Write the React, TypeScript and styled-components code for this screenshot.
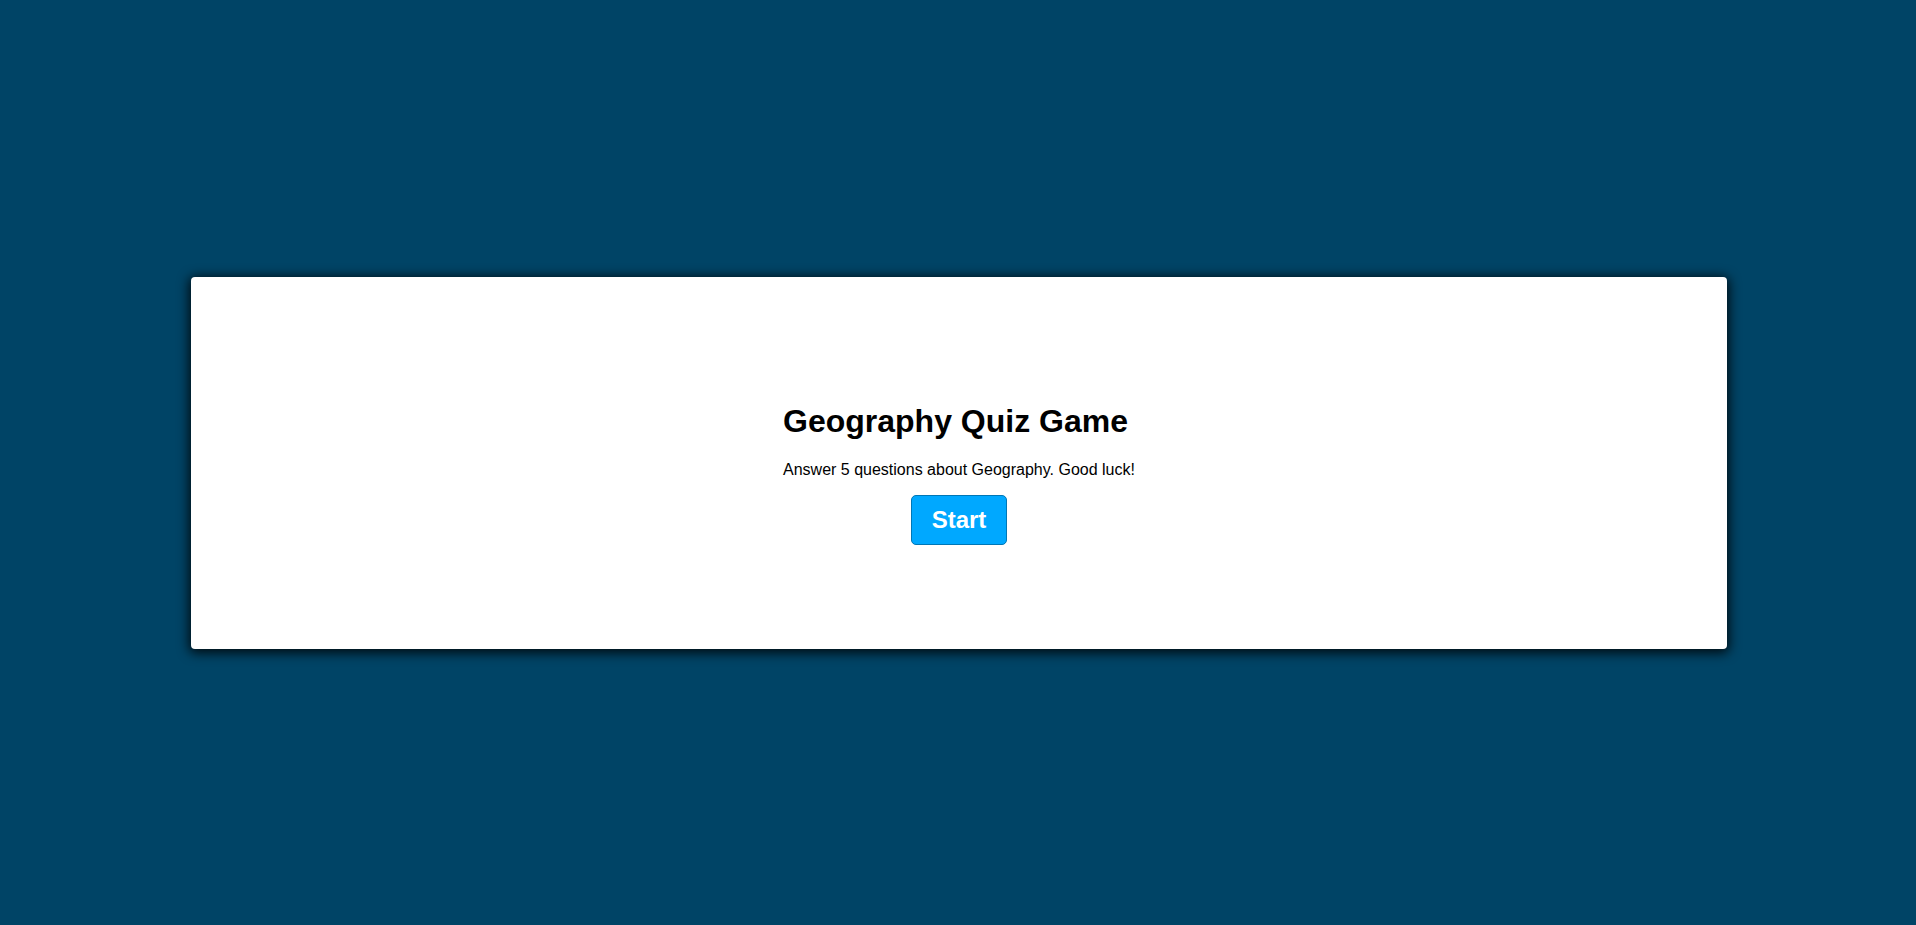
import styled, { createGlobalStyle } from 'styled-components'

const GlobalStyle = createGlobalStyle`
  html, body {
    margin: 0;
    padding: 0;
    height: 100%;
  }
  body {
    background-color: #004466;
    font-family: "Liberation Sans", Arial, sans-serif;
  }
  #root {
    height: 100%;
  }
`

export default function App() {
  return (
    <>
      <GlobalStyle />
      <Page>
        <Card>
          <Intro>
            <Title>Geography Quiz Game</Title>
            <Subtitle>Answer 5 questions about Geography. Good luck!</Subtitle>
            <StartButton>Start</StartButton>
          </Intro>
        </Card>
      </Page>
    </>
  )
}

const Page = styled.div`
  height: 925px;
  padding-left: 2px;
  box-sizing: border-box;
  display: flex;
  align-items: center;
  justify-content: center;
`

const Card = styled.div`
  width: 1536px;
  height: 372px;
  background-color: #fff;
  border-radius: 4px;
  box-shadow: 0 2px 12px 2px rgba(0, 0, 0, 0.85);
  display: flex;
  align-items: center;
  justify-content: center;
`

const Intro = styled.div`
  display: flex;
  flex-direction: column;
  align-items: flex-start;
  color: #000;
  margin-top: 2px;
`

const Title = styled.h1`
  font-size: 32px;
  font-weight: bold;
  margin: 21px 0 21px;
`

const Subtitle = styled.p`
  font-size: 16px;
  margin: 0 0 16px;
`

const StartButton = styled.button`
  align-self: center;
  font-family: "Liberation Sans", Arial, sans-serif;
  font-size: 24px;
  font-weight: bold;
  color: #fff;
  background-color: #00a8ff;
  border: 1px solid #0077b6;
  border-radius: 5px;
  padding: 10px 20px;
  cursor: pointer;
`
